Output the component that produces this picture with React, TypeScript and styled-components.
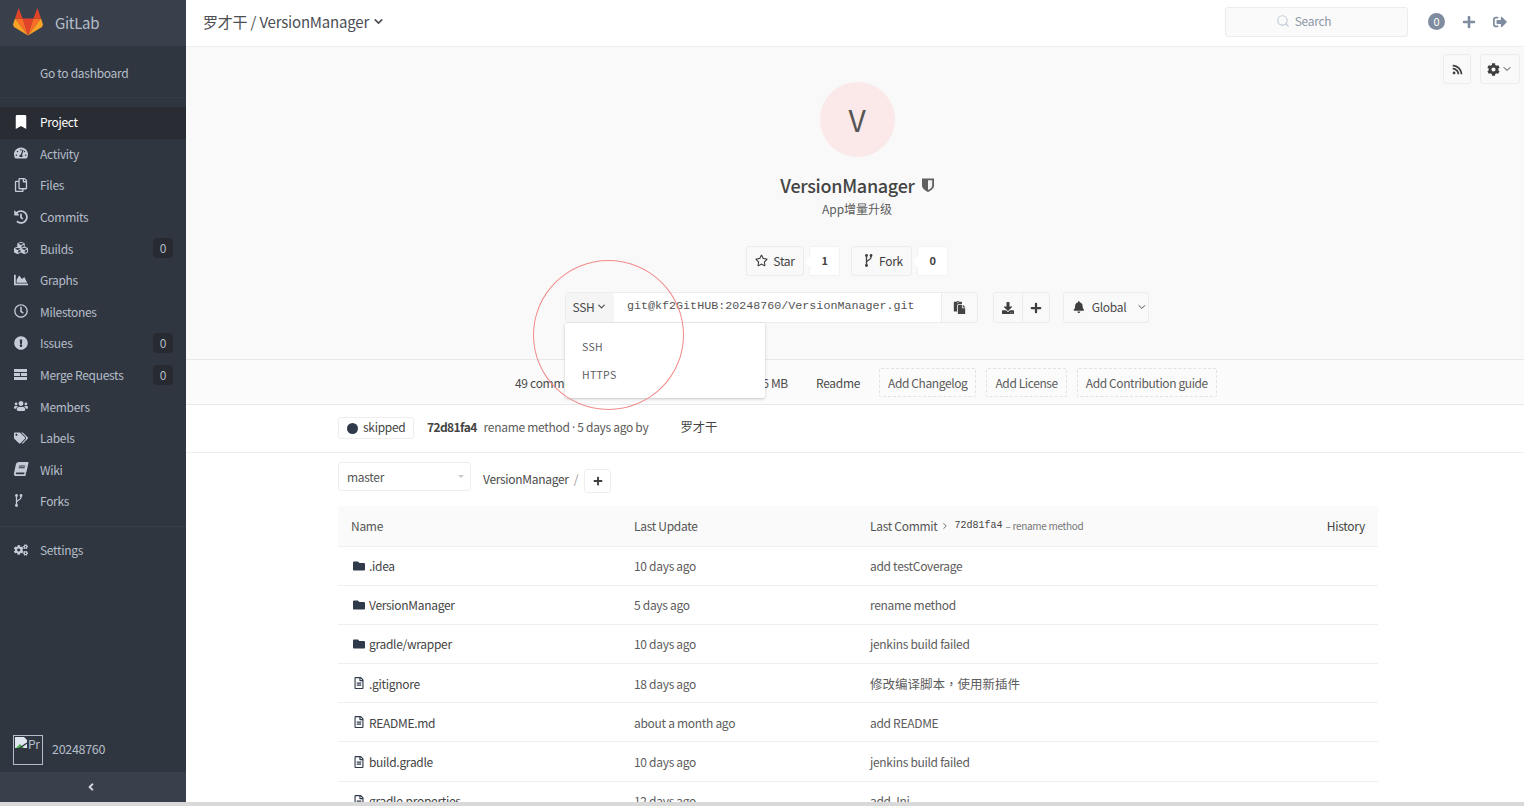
import React from 'react'
import styled, { createGlobalStyle } from 'styled-components'
import {
  FaAngleLeft,
  FaBell,
  FaBook,
  FaBookmark,
  FaChartArea,
  FaCog,
  FaCogs,
  FaCubes,
  FaDownload,
  FaExclamationCircle,
  FaFolder,
  FaHistory,
  FaPaste,
  FaPlus,
  FaRegClock,
  FaRegCopy,
  FaRegFileAlt,
  FaRegStar,
  FaRss,
  FaSignOutAlt,
  FaTachometerAlt,
  FaTags,
  FaUsers,
} from 'react-icons/fa'
import { ChevronDown, ChevronRight, Search } from 'lucide-react'

const GlobalStyle = createGlobalStyle`
  html, body {
    margin: 0;
    padding: 0;
    height: 100%;
    overflow: hidden;
    background: #fff;
  }
  body {
    font-family: "Noto Sans CJK SC", "Noto Sans", sans-serif;
    font-size: 12px;
    letter-spacing: -0.3px;
    color: #5c5c5c;
  }
  * {
    box-sizing: border-box;
  }
`

const Page = styled.div`
  width: 1524px;
  height: 806px;
  display: flex;
  flex-direction: column;
  overflow: hidden;
  position: relative;
`

const Body = styled.div`
  flex: 1;
  min-height: 0;
  display: flex;
`

const BottomStrip = styled.div`
  height: 4px;
  background: #d9d9d9;
`

const Sidebar = styled.aside`
  width: 186px;
  flex: none;
  display: flex;
  flex-direction: column;
  background: #303640;
  color: #b4bdc9;
`

const Brand = styled.div`
  height: 46px;
  display: flex;
  align-items: center;
  gap: 12px;
  padding: 0 0 2px 13px;
  background: #39404b;
  font-size: 15px;
  color: #b4bdc9;
`

const Dashboard = styled.div`
  height: 52px;
  padding: 18px 0 0 40px;
  line-height: 18px;
  border-bottom: 1px solid #373d48;
  margin-bottom: 9px;
`

const NavList = styled.nav`
  display: flex;
  flex-direction: column;
`

const NavItem = styled.div<{ $active?: boolean }>`
  height: 31.6px;
  display: flex;
  align-items: center;
  padding: 0 13px 2px 14px;
  background: ${p => (p.$active ? '#2a2c33' : 'transparent')};
  color: ${p => (p.$active ? '#fff' : '#b4bdc9')};
  svg {
    color: ${p => (p.$active ? '#fff' : '#c4ccd7')};
  }
`

const NavIcon = styled.span`
  width: 26px;
  flex: none;
  display: flex;
  align-items: center;
  font-size: 14px;
`

const WikiIcon = styled(FaBook)`
  transform: skewX(-12deg);
`

const NavCount = styled.span`
  margin-left: auto;
  width: 20px;
  height: 20px;
  border-radius: 4px;
  background: #272a30;
  text-align: center;
  line-height: 20px;
  font-size: 12px;
`

const NavDivider = styled.div`
  height: 1px;
  margin: 8px 0;
  background: #383e49;
`

const UserRow = styled.div`
  margin-top: auto;
  display: flex;
  align-items: center;
  gap: 9px;
  padding: 0 0 7px 13px;
`

const UserName = styled.span`
  margin-bottom: 3px;
  font-size: 12.5px;
`

const BrokenAvatar = styled.div`
  width: 30px;
  height: 30px;
  padding: 1px;
  border: 1px solid #b4bdc9;
  display: flex;
  align-items: flex-start;
  overflow: hidden;
  font-size: 12px;
  line-height: 14px;
  white-space: nowrap;
  svg {
    flex: none;
  }
`

const Collapse = styled.div`
  height: 30px;
  display: flex;
  align-items: center;
  justify-content: center;
  padding-right: 4px;
  background: #39404b;
  color: #d5dae1;
  font-size: 12px;
`

const Main = styled.main`
  flex: 1;
  min-width: 0;
  display: flex;
  flex-direction: column;
  overflow: hidden;
`

const TopBar = styled.header`
  height: 47px;
  flex: none;
  display: flex;
  align-items: center;
  padding: 0 17px 3px 17px;
  background: #fff;
  border-bottom: 1px solid #eeeeee;
`

const PageTitle = styled.div`
  display: flex;
  align-items: center;
  gap: 3px;
  font-size: 15px;
  letter-spacing: -0.2px;
  color: #4c4e54;
`

const SearchBox = styled.div`
  margin-left: auto;
  width: 183px;
  height: 30px;
  display: flex;
  align-items: center;
  justify-content: center;
  gap: 5px;
  padding: 0 26px 2px 0;
  background: #fafafa;
  border: 1px solid #ececec;
  border-radius: 3px;
  color: #8d97a5;
`

const TodoBadge = styled.span`
  width: 17px;
  height: 17px;
  margin-left: 20px;
  border-radius: 50%;
  background: #7f8ca0;
  color: #fff;
  font-size: 11px;
  line-height: 17px;
  text-align: center;
`

const TopIcon = styled.span`
  margin-left: 17px;
  width: 14px;
  display: flex;
  color: #7f8ca0;
  font-size: 14px;
`

const ProjectHead = styled.section`
  height: 313px;
  flex: none;
  position: relative;
  display: flex;
  flex-direction: column;
  align-items: center;
  padding: 35px 0 0 4px;
  background: #f9f9f9;
  border-bottom: 1px solid #e8e8e8;
`

const CornerActions = styled.div`
  position: absolute;
  top: 7px;
  right: 4px;
  display: flex;
  gap: 9px;
`

const GhostButton = styled.button<{ $width?: number }>`
  height: 30px;
  width: ${p => (p.$width ? `${p.$width}px` : 'auto')};
  padding: 0;
  display: flex;
  align-items: center;
  justify-content: center;
  gap: 1px;
  background: #f9f9f9;
  border: 1px solid #ececec;
  border-radius: 3px;
  font: inherit;
  letter-spacing: inherit;
  color: #3f3f3f;
`

const Avatar = styled.div`
  width: 75px;
  height: 75px;
  border-radius: 50%;
  background: #fbe8e8;
  color: #555;
  font-size: 30px;
  line-height: 74px;
  text-align: center;
`

const ProjectName = styled.h1`
  margin: 15px 0 0;
  display: flex;
  align-items: center;
  gap: 7px;
  height: 26px;
  line-height: 26px;
  font-size: 18px;
  letter-spacing: -0.3px;
  font-weight: 500;
  color: #444;
`

const ProjectDesc = styled.p`
  margin: 2px 0 0;
  line-height: 18px;
  letter-spacing: 0;
  color: #5c5c5c;
`

const SocialRow = styled.div`
  margin: 28px 20px 0 0;
  display: flex;
  gap: 11px;
`

const SocialGroup = styled.div`
  display: flex;
  gap: 5px;
`

const SocialButton = styled(GhostButton)`
  gap: 5px;
  padding-bottom: 1px;
  svg {
    font-size: 13px;
  }
`

const ForkButton = styled(SocialButton)`
  gap: 6px;
  padding-left: 4px;
`

const SocialCount = styled.span`
  position: relative;
  min-width: 31px;
  height: 30px;
  background: #fff;
  border: 1px solid #f2f2f2;
  border-radius: 2px;
  text-align: center;
  line-height: 27px;
  font-size: 11px;
  font-weight: 700;
  color: #444;
  &::before {
    content: '';
    position: absolute;
    left: -4px;
    top: 11px;
    width: 7px;
    height: 7px;
    background: #fff;
    transform: rotate(45deg);
  }
`

const CloneRow = styled.div`
  margin-top: 16px;
  display: flex;
`

const CloneGroup = styled.div`
  display: flex;
  height: 31px;
  border: 1px solid #ececec;
  border-radius: 3px;
`

const CloneKind = styled.div`
  width: 48px;
  display: flex;
  align-items: center;
  justify-content: center;
  gap: 2px;
  padding-bottom: 2px;
  background: #f5f5f5;
  color: #4a4a4a;
`

const CloneUrl = styled.div`
  width: 327px;
  padding-left: 13px;
  background: #fff;
  font-family: "Liberation Mono", monospace;
  font-size: 11.7px;
  letter-spacing: 0;
  line-height: 27px;
  color: #555;
`

const CopyButton = styled.div`
  width: 36px;
  display: flex;
  align-items: center;
  justify-content: center;
  border-left: 1px solid #ececec;
  color: #444;
  font-size: 13px;
`

const ActionPair = styled(CloneGroup)`
  margin-left: 15px;
`

const ActionCell = styled.div`
  width: 27.5px;
  display: flex;
  align-items: center;
  justify-content: center;
  color: #3f3f3f;
  font-size: 12px;
  & + & {
    border-left: 1px solid #ececec;
  }
`

const NotifyButton = styled(CloneGroup)`
  margin-left: 13px;
  width: 86px;
  align-items: center;
  padding: 0 0 2px 9px;
  gap: 7px;
  color: #4a4a4a;
  svg:first-child {
    font-size: 12px;
    color: #3f3f3f;
  }
  svg:last-child {
    margin-left: 3px;
  }
`

const StatsBar = styled.section`
  height: 45px;
  flex: none;
  display: flex;
  align-items: center;
  padding-left: 315px;
  background: #fbfbfb;
  border-bottom: 1px solid #e8e8e8;
`

const StatItem = styled.span`
  padding: 0 14px;
  color: #4a4a4a;
  white-space: nowrap;
`

// these two sit under the open clone menu in the picture
const CoveredStats = styled.div`
  display: flex;
  margin-right: 15px;
`

const DashedItem = styled.span`
  height: 29px;
  margin: 0 5px;
  padding: 0 8px;
  border: 1px dashed #e2e2e2;
  border-radius: 2px;
  line-height: 27px;
  letter-spacing: -0.4px;
  white-space: nowrap;
  color: #5c5c5c;
`

const CloneMenu = styled.div`
  position: absolute;
  left: 565px;
  top: 323px;
  width: 200px;
  height: 75px;
  padding: 15px 0 0 17px;
  background: #fff;
  border-radius: 2px;
  box-shadow: 0 1px 3px rgba(0, 0, 0, 0.22);
  z-index: 2;
`

const CloneOption = styled.div`
  height: 28px;
  line-height: 18px;
  font-size: 10.5px;
  letter-spacing: 0.3px;
  color: #5c5c5c;
`

const RedRing = styled.div`
  position: absolute;
  left: 533px;
  top: 260px;
  width: 151px;
  height: 150px;
  border: 1px solid #f28b8b;
  border-radius: 50%;
  z-index: 3;
`

const CommitBar = styled.section`
  height: 48px;
  flex: none;
  display: flex;
  align-items: flex-start;
  padding: 12px 0 0 152px;
  border-bottom: 1px solid #eeeeee;
`

const StatusBadge = styled.span`
  width: 76px;
  height: 22px;
  display: flex;
  align-items: center;
  gap: 5px;
  padding: 0 0 3px 8px;
  border: 1px solid #eeeeee;
  border-radius: 3px;
  color: #444;
  &::before {
    content: '';
    width: 11px;
    height: 11px;
    margin-top: 3px;
    border-radius: 50%;
    background: #2f3a4a;
  }
`

const CommitSha = styled.strong`
  margin-left: 13px;
  font-size: 12px;
  letter-spacing: -0.6px;
  line-height: 20px;
  font-weight: 700;
  color: #444;
`

const CommitText = styled.span`
  margin-left: 7px;
  line-height: 20px;
`

const MidDot = styled.span`
  font-family: "Noto Sans", sans-serif;
`

const CommitAuthor = styled.span`
  margin-left: 32px;
  line-height: 20px;
  font-size: 12.3px;
  letter-spacing: 0;
  color: #444;
`

const Content = styled.section`
  width: 1040px;
  margin-left: 152px;
`

const TreeBar = styled.div`
  height: 53px;
  display: flex;
  align-items: flex-start;
  padding-top: 9px;
`

const BranchSelect = styled.div`
  width: 133px;
  height: 29px;
  display: flex;
  align-items: center;
  justify-content: space-between;
  padding: 0 6px 0 8px;
  border: 1px solid #eeeeee;
  border-radius: 3px;
  color: #555;
  &::after {
    content: '';
    border: 3px solid transparent;
    border-top-color: #c9c9c9;
    border-bottom-width: 0;
  }
`

const TreePath = styled.span`
  margin: 8px 0 0 12px;
  line-height: 18px;
  color: #4a4a4a;
`

const TreeSlash = styled.span`
  margin: 8px 6px 0 5px;
  line-height: 18px;
  color: #999;
`

const TreeAdd = styled.span`
  width: 27px;
  height: 24px;
  margin-top: 7px;
  display: flex;
  align-items: center;
  justify-content: center;
  border: 1px solid #eeeeee;
  border-radius: 3px;
  color: #3f3f3f;
  font-size: 10px;
`

const FileTable = styled.table`
  width: 100%;
  border-collapse: collapse;
  table-layout: fixed;
`

const HeadRow = styled.tr`
  height: 40px;
  background: #fafafa;
  border-bottom: 1px solid #efefef;
`

const HeadCell = styled.th<{ $width?: number }>`
  width: ${p => (p.$width ? `${p.$width}px` : 'auto')};
  padding: 0 13px;
  font-weight: 400;
  text-align: left;
  color: #555;
`

const CommitHead = styled.div`
  display: flex;
  align-items: center;
  svg {
    margin: 0 5px 0 2px;
  }
`

const HeadSha = styled.span`
  font-family: "Liberation Mono", monospace;
  font-size: 10px;
  letter-spacing: 0;
  color: #444;
`

const HeadMessage = styled.span`
  margin-left: 3px;
  font-size: 10px;
  color: #777;
`

const History = styled.span`
  margin-left: auto;
  color: #444;
`

const FileRow = styled.tr`
  height: 39.2px;
  border-bottom: 1px solid #efefef;
`

const FileCell = styled.td`
  padding: 0 13px;
  white-space: nowrap;
  overflow: hidden;
`

const FileName = styled.div`
  display: flex;
  align-items: center;
  gap: 4px;
  margin-left: 2px;
  color: #444;
  svg {
    font-size: 12px;
    color: #2f3a4a;
  }
`

const CjkMessage = styled.span`
  font-size: 12.5px;
  letter-spacing: 0;
`

const CenteredComma = styled.span`
  font-family: "Noto Sans CJK TC", sans-serif;
`

const ForkGlyph = () => (
  <svg width="9" height="13" viewBox="0 0 9 13" fill="none" stroke="currentColor" strokeWidth="1.3">
    <path d="M2.5 1v11M7 1v2.5C7 6 2.5 6 2.5 8.5" />
    <circle cx="2.5" cy="1.5" r=".8" fill="currentColor" />
    <circle cx="7" cy="1.5" r=".8" fill="currentColor" />
    <circle cx="2.5" cy="11.5" r=".8" fill="currentColor" />
  </svg>
)

const MergeGlyph = () => (
  <svg width="13" height="11" viewBox="0 0 13 11" fill="currentColor">
    <path d="M0 0h13v3H0zM0 4h6v3H0zM7 4h6v3H7zM0 8h13v3H0z" />
  </svg>
)

const HalfShield = () => (
  <svg width="12" height="14" viewBox="0 0 12 14">
    <path d="M0 .5h12v7c0 3-3 5-6 6.500-3-1.500-6-3.500-6-6.500z" fill="#5f5f5f" />
    <path d="M6 2.200h4.200v5.200c0 2-2.200 3.600-4.200 4.700z" fill="#f3f3f3" />
  </svg>
)

const Tanuki = () => (
  <svg width="30" height="28" viewBox="0 0 30 28">
    <polygon points="15,27.5 9.6,10.5 20.4,10.5" fill="#e24329" />
    <polygon points="15,27.5 9.6,10.5 2,10.5" fill="#fc6d26" />
    <polygon points="15,27.5 20.4,10.5 28,10.5" fill="#fc6d26" />
    <polygon points="2,10.5 0,16.5 1,19 15,27.5" fill="#fca326" />
    <polygon points="28,10.5 30,16.5 29,19 15,27.5" fill="#fca326" />
    <polygon points="2,10.5 5.6,0 9.6,10.5" fill="#e24329" />
    <polygon points="28,10.5 24.4,0 20.4,10.5" fill="#e24329" />
  </svg>
)

const BrokenImage = () => (
  <svg width="13" height="14" viewBox="0 0 13 14">
    <path d="M0 0h9l3 3v8H0z" fill="#dfe6ee" />
    <path d="M1 11l4-4 4 4z" fill="#4caf50" />
    <path d="M2 13L12 6" stroke="#2f3640" strokeWidth="1.4" />
  </svg>
)

const navItems = [
  { label: 'Project', icon: <FaBookmark />, active: true },
  { label: 'Activity', icon: <FaTachometerAlt /> },
  { label: 'Files', icon: <FaRegCopy /> },
  { label: 'Commits', icon: <FaHistory /> },
  { label: 'Builds', icon: <FaCubes />, count: 0 },
  { label: 'Graphs', icon: <FaChartArea /> },
  { label: 'Milestones', icon: <FaRegClock /> },
  { label: 'Issues', icon: <FaExclamationCircle />, count: 0 },
  { label: 'Merge Requests', icon: <MergeGlyph />, count: 0 },
  { label: 'Members', icon: <FaUsers /> },
  { label: 'Labels', icon: <FaTags /> },
  { label: 'Wiki', icon: <WikiIcon /> },
  { label: 'Forks', icon: <ForkGlyph /> },
]

const files = [
  { name: '.idea', dir: true, updated: '10 days ago', commit: 'add testCoverage' },
  { name: 'VersionManager', dir: true, updated: '5 days ago', commit: 'rename method' },
  { name: 'gradle/wrapper', dir: true, updated: '10 days ago', commit: 'jenkins build failed' },
  {
    name: '.gitignore',
    updated: '18 days ago',
    commit: (
      <CjkMessage>
        修改编译脚本<CenteredComma>，</CenteredComma>使用新插件
      </CjkMessage>
    ),
  },
  { name: 'README.md', updated: 'about a month ago', commit: 'add README' },
  { name: 'build.gradle', updated: '10 days ago', commit: 'jenkins build failed' },
  { name: 'gradle.properties', updated: '12 days ago', commit: 'add .Ini' },
]

const App = () => (
  <Page>
    <GlobalStyle />
    <Body>
      <Sidebar>
        <Brand>
          <Tanuki />
          GitLab
        </Brand>
        <Dashboard>Go to dashboard</Dashboard>
        <NavList>
          {navItems.map(item => (
            <NavItem key={item.label} $active={item.active}>
              <NavIcon>{item.icon}</NavIcon>
              {item.label}
              {item.count !== undefined && <NavCount>{item.count}</NavCount>}
            </NavItem>
          ))}
          <NavDivider />
          <NavItem>
            <NavIcon>
              <FaCogs />
            </NavIcon>
            Settings
          </NavItem>
        </NavList>
        <UserRow>
          <BrokenAvatar>
            <BrokenImage />
            Pr
          </BrokenAvatar>
          <UserName>20248760</UserName>
        </UserRow>
        <Collapse>
          <FaAngleLeft />
        </Collapse>
      </Sidebar>

      <Main>
        <TopBar>
          <PageTitle>
            罗才干 / VersionManager
            <ChevronDown size={13} strokeWidth={3} />
          </PageTitle>
          <SearchBox>
            <Search size={14} color="#c5ccd5" />
            Search
          </SearchBox>
          <TodoBadge>0</TodoBadge>
          <TopIcon>
            <FaPlus />
          </TopIcon>
          <TopIcon>
            <FaSignOutAlt />
          </TopIcon>
        </TopBar>

        <ProjectHead>
          <CornerActions>
            <GhostButton $width={28}>
              <FaRss size={11} />
            </GhostButton>
            <GhostButton $width={40}>
              <FaCog size={13} />
              <ChevronDown size={12} />
            </GhostButton>
          </CornerActions>
          <Avatar>V</Avatar>
          <ProjectName>
            VersionManager
            <HalfShield />
          </ProjectName>
          <ProjectDesc>App增量升级</ProjectDesc>
          <SocialRow>
            <SocialGroup>
              <SocialButton $width={58}>
                <FaRegStar />
                Star
              </SocialButton>
              <SocialCount>1</SocialCount>
            </SocialGroup>
            <SocialGroup>
              <ForkButton $width={61}>
                <ForkGlyph />
                Fork
              </ForkButton>
              <SocialCount>0</SocialCount>
            </SocialGroup>
          </SocialRow>
          <CloneRow>
            <CloneGroup>
              <CloneKind>
                SSH
                <ChevronDown size={11} strokeWidth={2.5} />
              </CloneKind>
              <CloneUrl>git@kf2GitHUB:20248760/VersionManager.git</CloneUrl>
              <CopyButton>
                <FaPaste />
              </CopyButton>
            </CloneGroup>
            <ActionPair>
              <ActionCell>
                <FaDownload />
              </ActionCell>
              <ActionCell>
                <FaPlus />
              </ActionCell>
            </ActionPair>
            <NotifyButton>
              <FaBell />
              Global
              <ChevronDown size={12} />
            </NotifyButton>
          </CloneRow>
        </ProjectHead>

        <StatsBar>
          <StatItem>49 commits</StatItem>
          <CoveredStats>
            <StatItem>1 branch</StatItem>
            <StatItem>0 tags</StatItem>
          </CoveredStats>
          <StatItem>1.6 MB</StatItem>
          <StatItem>Readme</StatItem>
          <DashedItem>Add Changelog</DashedItem>
          <DashedItem>Add License</DashedItem>
          <DashedItem>Add Contribution guide</DashedItem>
        </StatsBar>

        <CommitBar>
          <StatusBadge>skipped</StatusBadge>
          <CommitSha>72d81fa4</CommitSha>
          <CommitText>
            rename method <MidDot>·</MidDot> 5 days ago by
          </CommitText>
          <CommitAuthor>罗才干</CommitAuthor>
        </CommitBar>

        <Content>
          <TreeBar>
            <BranchSelect>master</BranchSelect>
            <TreePath>VersionManager</TreePath>
            <TreeSlash>/</TreeSlash>
            <TreeAdd>
              <FaPlus />
            </TreeAdd>
          </TreeBar>
          <FileTable>
            <thead>
              <HeadRow>
                <HeadCell $width={283}>Name</HeadCell>
                <HeadCell $width={236}>Last Update</HeadCell>
                <HeadCell>
                  <CommitHead>
                    Last Commit
                    <ChevronRight size={10} strokeWidth={2} />
                    <HeadSha>72d81fa4</HeadSha>
                    <HeadMessage>– rename method</HeadMessage>
                    <History>History</History>
                  </CommitHead>
                </HeadCell>
              </HeadRow>
            </thead>
            <tbody>
              {files.map(file => (
                <FileRow key={file.name}>
                  <FileCell>
                    <FileName>
                      {file.dir ? <FaFolder /> : <FaRegFileAlt />}
                      {file.name}
                    </FileName>
                  </FileCell>
                  <FileCell>{file.updated}</FileCell>
                  <FileCell>{file.commit}</FileCell>
                </FileRow>
              ))}
            </tbody>
          </FileTable>
        </Content>
      </Main>
    </Body>
    <BottomStrip />
    <CloneMenu>
      <CloneOption>SSH</CloneOption>
      <CloneOption>HTTPS</CloneOption>
    </CloneMenu>
    <RedRing />
  </Page>
)

export default App
